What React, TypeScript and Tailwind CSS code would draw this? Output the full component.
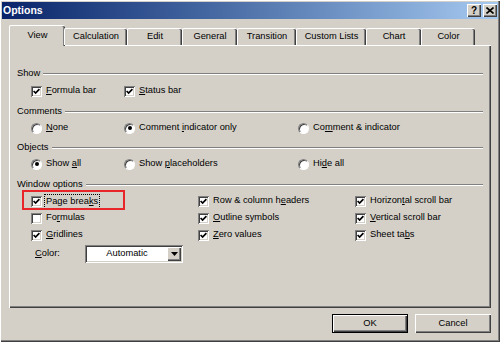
import React from "react";

const raised =
  "shadow-[inset_1px_1px_0_#ffffff,inset_-1px_-1px_0_#404040,inset_-2px_-2px_0_#808080]";
const sunken =
  "shadow-[inset_1px_1px_0_#808080,inset_-1px_-1px_0_#ffffff,inset_2px_2px_0_#404040,inset_-2px_-2px_0_#d4d0c8]";

function U({ t, u }: { t: string; u?: number }) {
  if (u === undefined || u < 0) return <>{t}</>;
  return (
    <>
      {t.slice(0, u)}
      <span className="underline underline-offset-[1px]">{t[u]}</span>
      {t.slice(u + 1)}
    </>
  );
}

function CheckBox({ checked }: { checked: boolean }) {
  return (
    <span className={`w-[11px] h-[11px] bg-white shrink-0 flex items-center justify-center ${sunken}`}>
      {checked && (
        <svg width="7" height="7" viewBox="0 0 7 7">
          <path d="M0.6 3 L2.6 5 L6.4 1.2" stroke="#000" strokeWidth="1.7" fill="none" />
        </svg>
      )}
    </span>
  );
}

function Radio({ on }: { on: boolean }) {
  return (
    <span className="w-[11px] h-[11px] rounded-full bg-white shrink-0 flex items-center justify-center border border-t-[#808080] border-l-[#808080] border-r-white border-b-white shadow-[inset_1px_1px_0_#404040]">
      {on && <span className="w-[4px] h-[4px] rounded-full bg-black" />}
    </span>
  );
}

function Check({ t, u, checked, focus }: { t: string; u?: number; checked: boolean; focus?: boolean }) {
  return (
    <div className="flex items-center h-[16px] gap-[4px] whitespace-nowrap">
      <CheckBox checked={checked} />
      <span className={focus ? "outline outline-1 outline-dotted outline-black px-[1px] -ml-[1px] leading-[13px]" : ""}>
        <U t={t} u={u} />
      </span>
    </div>
  );
}

function Opt({ t, u, on }: { t: string; u?: number; on: boolean }) {
  return (
    <div className="flex items-center h-[16px] gap-[4px] whitespace-nowrap">
      <Radio on={on} />
      <span>
        <U t={t} u={u} />
      </span>
    </div>
  );
}

function Header({ t, className = "" }: { t: string; className?: string }) {
  return (
    <div className={`flex items-center h-[14px] gap-[3px] ${className}`}>
      <span className="whitespace-nowrap">{t}</span>
      <div className="flex-1 h-[2px] border-t border-t-[#808080] border-b border-b-white" />
    </div>
  );
}

const tabs = ["View", "Calculation", "Edit", "General", "Transition", "Custom Lists", "Chart", "Color"];
const tabW = [56, 63, 55, 55, 59, 70, 55, 54];

export default function App() {
  return (
    <div className="w-[500px] h-[342px] bg-[#d4d0c8] text-black font-['Liberation_Sans',Arial,sans-serif] text-[9.3px] overflow-hidden shadow-[inset_1px_1px_0_#ffffff,inset_-1px_-1px_0_#404040,inset_-2px_-2px_0_#808080] p-[2px] flex flex-col">
      {/* Title bar */}
      <div className="h-[17px] bg-gradient-to-r from-[#0a246a] to-[#a6caf0] flex items-center justify-between pl-[1px] pr-[1px]">
        <span className="text-white font-bold text-[10.5px] leading-none">Options</span>
        <div className="flex gap-[2px]">
          <div className={`w-[14px] h-[13px] bg-[#d4d0c8] ${raised} flex items-center justify-center font-bold text-[10px] leading-none`}>?</div>
          <div className={`w-[14px] h-[13px] bg-[#d4d0c8] ${raised} flex items-center justify-center`}>
            <svg width="8" height="7" viewBox="0 0 8 7">
              <path d="M0.5 0.5 L7.5 6.5 M7.5 0.5 L0.5 6.5" stroke="#000" strokeWidth="1.6" />
            </svg>
          </div>
        </div>
      </div>

      {/* Tabs */}
      <div className="mt-[6px] ml-[7px] h-[20px] flex items-end relative z-10">
        {tabs.map((t, i) => {
          const sel = i === 0;
          return (
            <div
              key={t}
              style={{ width: tabW[i] }}
              className={
                sel
                  ? "h-[21px] -mb-[1px] -mr-[1px] bg-[#d4d0c8] flex items-center justify-center border-t border-l border-white rounded-t-[2px] shadow-[inset_-1px_0_0_#404040,inset_-2px_0_0_#808080] pb-[1px]"
                  : "h-[17px] bg-[#d4d0c8] flex items-center justify-center border-t border-l border-white rounded-t-[2px] shadow-[inset_-1px_0_0_#404040,inset_-2px_0_0_#808080]"
              }
            >
              {t}
            </div>
          );
        })}
      </div>

      {/* Panel */}
      <div className="ml-[7px] w-[482px] h-[263px] border-t border-l border-white shadow-[inset_-1px_-1px_0_#404040,inset_-2px_-2px_0_#808080] pt-[21px] pl-[7px] pr-[8px] relative">
        <Header t="Show" />
        <div className="mt-[2px] pl-[14px] grid grid-cols-[93px_174px_1fr]">
          <Check t="Formula bar" u={0} checked />
          <Check t="Status bar" u={0} checked />
        </div>

        <Header t="Comments" className="mt-[6px]" />
        <div className="mt-[1px] pl-[14px] grid grid-cols-[93px_174px_1fr]">
          <Opt t="None" u={0} on={false} />
          <Opt t="Comment indicator only" u={8} on />
          <Opt t="Comment & indicator" u={2} on={false} />
        </div>

        <Header t="Objects" className="mt-[5px]" />
        <div className="mt-[1px] pl-[14px] grid grid-cols-[93px_174px_1fr]">
          <Opt t="Show all" u={5} on />
          <Opt t="Show placeholders" u={5} on={false} />
          <Opt t="Hide all" u={2} on={false} />
        </div>

        <Header t="Window options" className="mt-[6px]" />
        <div className="mt-[1px] pl-[14px] grid grid-cols-[167px_157px_1fr] gap-y-[1px]">
          <Check t="Page breaks" u={9} checked focus />
          <Check t="Row & column headers" u={14} checked />
          <Check t="Horizontal scroll bar" u={7} checked />
          <Check t="Formulas" u={2} checked={false} />
          <Check t="Outline symbols" u={0} checked />
          <Check t="Vertical scroll bar" u={0} checked />
          <Check t="Gridlines" u={0} checked />
          <Check t="Zero values" u={0} checked />
          <Check t="Sheet tabs" u={8} checked />
        </div>

        <div className="mt-[2px] pl-[18px] flex items-center h-[18px]">
          <span className="w-[50px]">
            <U t="Color:" u={0} />
          </span>
          <div className={`w-[98px] h-[18px] bg-white ${sunken} flex items-center p-[2px]`}>
            <span className="flex-1 text-center">Automatic</span>
            <div className={`w-[14px] h-[14px] bg-[#d4d0c8] ${raised} flex items-center justify-center`}>
              <svg width="7" height="4" viewBox="0 0 7 4">
                <path d="M0 0 H7 L3.5 4 Z" fill="#000" />
              </svg>
            </div>
          </div>
        </div>

        {/* annotation highlight */}
        <div className="absolute left-[12px] top-[144px] w-[103px] h-[20px] border-2 border-[#e8262a] pointer-events-none" />
      </div>

      {/* Buttons */}
      <div className="mt-[6px] flex justify-end gap-[7px] pr-[7px]">
        <div className="w-[76px] h-[19px] border border-black flex">
          <div className={`flex-1 bg-[#d4d0c8] ${raised} flex items-center justify-center`}>OK</div>
        </div>
        <div className={`w-[76px] h-[19px] bg-[#d4d0c8] shadow-[inset_1px_1px_0_#ffffff,inset_-1px_-1px_0_#404040,inset_-2px_-2px_0_#808080] flex items-center justify-center`}>
          Cancel
        </div>
      </div>
    </div>
  );
}
